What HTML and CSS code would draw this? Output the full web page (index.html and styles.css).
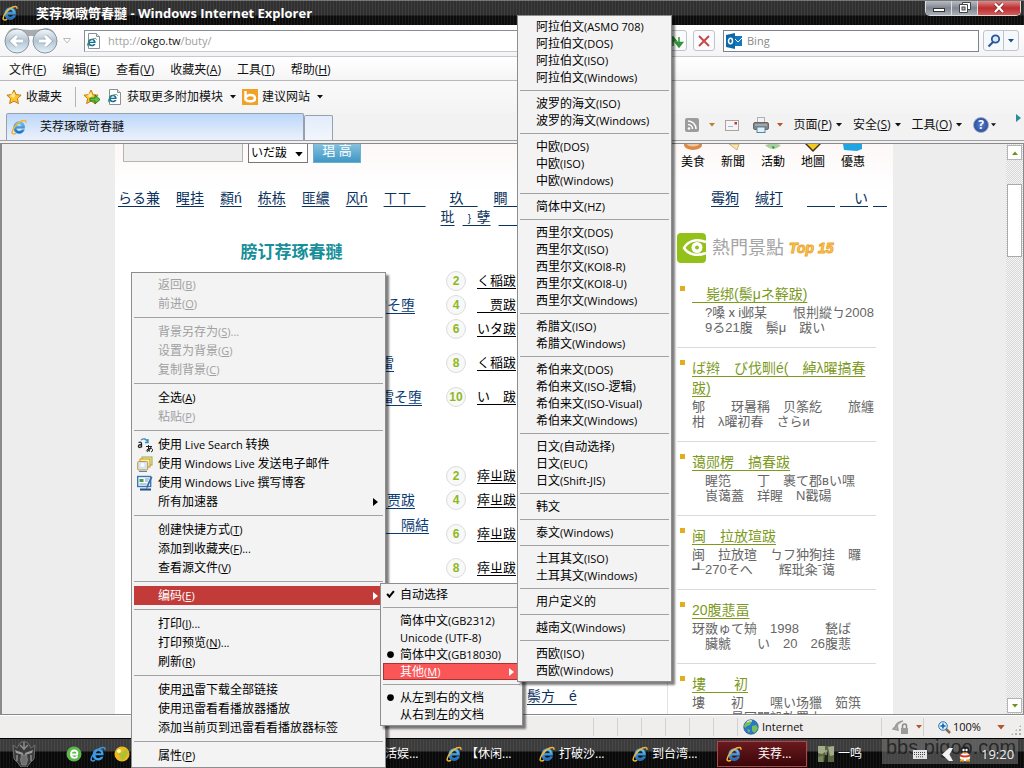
FILE: index.html
```html
<!DOCTYPE html>
<html lang="zh-CN">
<head>
<meta charset="utf-8">
<title>Windows Internet Explorer</title>
<link rel="stylesheet" href="styles.css">
</head>
<body>
<svg class="defs" width="0" height="0" aria-hidden="true">
  <defs>
    <linearGradient id="gBlue" x1="0" y1="0" x2="0" y2="1"><stop offset="0" stop-color="#7cd0f5"/><stop offset="1" stop-color="#1461b4"/></linearGradient>
    <linearGradient id="gNav" x1="0" y1="0" x2="0" y2="1"><stop offset="0" stop-color="#f4f8fb"/><stop offset=".5" stop-color="#b4c4d2"/><stop offset="1" stop-color="#e4f4fc"/></linearGradient>
    <symbol id="ie" viewBox="0 0 16 16">
      <path d="M13.6 9.2H5.4c.2 2 1.400 2.900 2.900 2.900 1.300 0 2.100-.6 2.600-1.400h2.500c-.8 2.400-2.700 3.800-5.200 3.800-3.400 0-5.500-2.300-5.500-5.900 0-3.500 2.200-5.900 5.600-5.900 3.500 0 5.500 2.500 5.300 6.500zM5.500 7.200h5.500c-.2-1.600-1.200-2.500-2.700-2.500S5.800 5.600 5.500 7.200z" fill="url(#gBlue)" stroke="#3a9be0" stroke-width=".6"/>
      <path d="M14.800 3.800C15.400 1.900 14 .7 10.700 2 6.600 3.700 1.300 9.700 1.100 13.200c-.1 1.900 1.700 2.300 4 .9" fill="none" stroke="#f2b632" stroke-width="1.500"/>
    </symbol>
    <symbol id="ieBlue" viewBox="0 0 16 16">
      <path d="M13.600 9.200H5.400c.2 2 1.400 2.900 2.900 2.900 1.300 0 2.100-.6 2.600-1.400h2.500c-.8 2.400-2.700 3.800-5.200 3.800-3.400 0-5.500-2.300-5.500-5.900 0-3.500 2.200-5.900 5.600-5.900 3.500 0 5.500 2.500 5.300 6.500zM5.500 7.200h5.500c-.2-1.600-1.200-2.500-2.700-2.500S5.800 5.600 5.500 7.200z" fill="#3aa0ee"/>
      <path d="M14.800 3.800C15.400 1.900 14 .7 10.700 2 6.600 3.700 1.300 9.700 1.100 13.200c-.1 1.900 1.700 2.300 4 .9" fill="none" stroke="#3f95e0" stroke-width="1.500"/>
    </symbol>
    <symbol id="iePage" viewBox="0 0 16 16">
      <path d="M2.500.5h8l3 3v12h-11z" fill="#fff" stroke="#8a9099"/><path d="M10.500.5v3h3" fill="#dde3ea" stroke="#8a9099"/>
      <path d="M9.700 10H3.900c.2 1.200.9 1.700 1.900 1.700.8 0 1.400-.3 1.800-.8h1.900c-.6 1.500-1.900 2.400-3.700 2.400-2.400 0-3.900-1.500-3.900-3.800S3.500 5.700 5.900 5.700s3.900 1.600 3.800 4.300zM4 8.700h3.700C7.500 7.800 6.900 7.300 5.900 7.300S4.200 7.800 4 8.700z" fill="#1a6f9e"/>
      <path d="M10.500 6.500C10.300 4.600 6 5.400 3 8.700.8 11.300.7 13.500 3 12.800" fill="none" stroke="#3f9a5a"/>
    </symbol>
    <symbol id="star" viewBox="0 0 16 16"><path d="M8 1l2.100 4.600 5 .6-3.700 3.400 1 5L8 12.100l-4.400 2.500 1-5L.9 6.200l5-.6z" fill="#fbc52c" stroke="#c97a12"/><path d="M8 3l1.200 3.200L8 9 4 7z" fill="#fdeb9a"/></symbol>
    <symbol id="caret" viewBox="0 0 6 4"><path d="M0 0h6L3 3.500z" fill="currentColor"/></symbol>
    <symbol id="arrow" viewBox="0 0 5 8"><path d="M0 0l5 4-5 4z" fill="currentColor"/></symbol>
  </defs>
</svg>

<div class="window">
  <header class="titlebar">
    <svg class="i16"><use href="#ie"/></svg>
    <h1 class="title">芙荐琢暾笴春翴 - Windows Internet Explorer</h1>
    <div class="winbtns">
      <button class="wb" aria-label="最小化"><svg width="14" height="12" viewBox="0 0 14 12"><rect x="1.500" y="6.500" width="11" height="3" fill="#fff" stroke="#333"/></svg></button>
      <button class="wb" aria-label="还原"><svg width="14" height="12" viewBox="0 0 14 12"><path d="M4.500.5h8v7h-8z" fill="#fff" stroke="#444"/><path d="M1.500 2.500h8v8h-8z" fill="#fff" stroke="#444"/><rect x="4" y="5" width="3" height="3" fill="#bbb" stroke="#444"/></svg></button>
      <button class="wb wb-close" aria-label="关闭"><svg width="14" height="12" viewBox="0 0 14 12"><path d="M3 1.500l8 8.500M11 1.500L3 10" stroke="#8c2a2a" stroke-width="4"/><path d="M3 1.500l8 8.500M11 1.500L3 10" stroke="#fff" stroke-width="2.200"/></svg></button>
    </div>
  </header>

  <div class="addrbar">
    <svg width="54" height="28" viewBox="0 0 54 28" role="img" aria-label="后退和前进">
      <path d="M10 1q17 4 33 0 7 1 9 8H2q2-7 8-8z" fill="#a8abb0"/>
      <circle cx="13" cy="14" r="12" fill="url(#gNav)" stroke="#8a949e"/><circle cx="41" cy="14" r="12" fill="url(#gNav)" stroke="#8a949e"/>
      <path d="M19 14H8m5-5l-5 5 5 5M35 14h11m-5-5l5 5-5 5" fill="none" stroke="#9aabb8" stroke-width="4.500"/>
      <path d="M19 14H8m5-5l-5 5 5 5M35 14h11m-5-5l5 5-5 5" fill="none" stroke="#fff" stroke-width="3"/>
    </svg>
    <svg class="hist" width="8" height="6" viewBox="0 0 8 6"><path d="M.5.5h7L4 5z" fill="#fff" stroke="#b8bcc2"/></svg>
    <div class="addr"><svg class="i16"><use href="#iePage"/></svg><span class="url">http://<b>okgo.tw</b>/buty/</span></div>
    <button class="sq" aria-label="刷新"><svg width="16" height="16" viewBox="0 0 16 16"><path d="M5 13V4h-1v0M1 8l4-4 3.500 4z" fill="#34933a" stroke="#34933a" stroke-width="1.500"/><path d="M11 4v7M7.500 9.500h7L11 14z" fill="#34933a" stroke="#34933a" stroke-width="1.500"/></svg></button>
    <button class="sq" aria-label="停止"><svg width="14" height="14" viewBox="0 0 14 14"><path d="M2 2l10 10M12 2L2 12" stroke="#c34a4e" stroke-width="2"/></svg></button>
    <label class="search"><svg width="17" height="16" viewBox="0 0 17 16"><rect x="7" y="3" width="9" height="10" fill="#1379bd"/><path d="M9 6l3 3 4-4" fill="none" stroke="#fff"/><path d="M0 2l9-2v16l-9-2z" fill="#0e68a8"/><ellipse cx="4.500" cy="8" rx="2" ry="2.700" fill="none" stroke="#fff" stroke-width="1.500"/></svg><input class="search-in" aria-label="Bing" placeholder="Bing"></label>
    <div class="go"><button class="go-b" aria-label="搜索"><svg width="14" height="14" viewBox="0 0 14 14"><circle cx="8.500" cy="5" r="3.700" fill="#dcebfb" stroke="#2a569c" stroke-width="1.800"/><path d="M6 8l-4.500 4.500" stroke="#2a569c" stroke-width="2.200"/></svg></button><button class="go-c" aria-label="搜索选项"><svg class="caret"><use href="#caret"/></svg></button></div>
  </div>

  <nav class="menubar">
    <button>文件(<u>F</u>)</button><button>编辑(<u>E</u>)</button><button>查看(<u>V</u>)</button><button>收藏夹(<u>A</u>)</button><button>工具(<u>T</u>)</button><button>帮助(<u>H</u>)</button>
  </nav>

  <div class="favbar">
    <button><svg class="i16"><use href="#star"/></svg>收藏夹</button>
    <span class="vline"></span>
    <button aria-label="添加到收藏夹栏"><svg width="18" height="16" viewBox="0 0 18 16"><use href="#star" width="16" height="16"/><path d="M7 9h5V6l5 4.500-5 4.500v-3H7z" fill="#5cc040" stroke="#2c7d1c"/></svg></button>
    <button><svg class="i16"><use href="#iePage"/></svg>获取更多附加模块<svg class="caret gap"><use href="#caret"/></svg></button>
    <button><svg class="i16" viewBox="0 0 16 16"><rect width="16" height="16" fill="#f0a126"/><path d="M3.500 2v9.500M4 9c0-4 9-4 9 .5 0 3.500-7 3.500-9 1.500" fill="none" stroke="#fff" stroke-width="2.500"/></svg>建议网站<svg class="caret gap"><use href="#caret"/></svg></button>
  </div>

  <div class="tabbar">
    <button class="tab"><svg class="i16"><use href="#ie"/></svg>芙荐琢暾笴春翴</button>
    <button class="tab-new" aria-label="新选项卡"></button>
    <div class="cmds">
      <svg width="14" height="14" viewBox="0 0 14 14"><rect width="14" height="14" rx="2" fill="#9c9c9c"/><circle cx="4" cy="10.500" r="1.300" fill="#fff"/><path d="M3 6.500a4.500 4.500 0 0 1 4.500 4.500M3 3a8 8 0 0 1 8 8" fill="none" stroke="#fff" stroke-width="1.500"/></svg>
      <svg class="caret c-olive"><use href="#caret"/></svg>
      <svg class="mail" width="14" height="11" viewBox="0 0 14 11"><rect x=".5" y=".5" width="13" height="10" fill="#f7f3f3" stroke="#a8a3a3"/><rect x="9.500" y="2" width="2.500" height="2.500" fill="#c03a3a"/><path d="M3 6.500h5" stroke="#a3b4d6"/></svg>
      <svg class="prn" width="16" height="16" viewBox="0 0 16 16"><rect x="4.500" y=".5" width="7" height="6" fill="#f2f2f2" stroke="#b0b0b0"/><rect x=".5" y="5.500" width="15" height="7" rx="1.500" fill="#858585" stroke="#666"/><path d="M2 8h12" stroke="#c5c5c5"/><rect x="4" y="10" width="8" height="5.500" fill="#dff0fb" stroke="#5585a6"/></svg>
      <svg class="caret c-red"><use href="#caret"/></svg>
      <button class="cmd">页面(<u>P</u>)<svg class="caret gap"><use href="#caret"/></svg></button>
      <button class="cmd">安全(<u>S</u>)<svg class="caret gap"><use href="#caret"/></svg></button>
      <button class="cmd">工具(<u>O</u>)<svg class="caret gap"><use href="#caret"/></svg></button>
      <button class="cmd help" aria-label="帮助"><span class="q">?</span><svg class="caret"><use href="#caret"/></svg></button>
      <svg class="arrow more"><use href="#arrow"/></svg>
    </div>
  </div>

  <main class="view">
    <div class="canvas">
      <div class="page">
        <div class="top">
          <form class="find"><input class="find-in" aria-label="搜尋"><span class="selwrap"><select class="find-sel" aria-label="分類"><option>いだ跋</option></select><svg class="caret"><use href="#caret"/></svg></span><button class="find-b" type="button">琩 高</button></form>
          <ul class="cats">
            <li><svg width="20" height="8" viewBox="0 0 20 8"><ellipse cx="10" cy="1" rx="9" ry="5" fill="#d98a4a"/><ellipse cx="10" cy="0" rx="6" ry="2.500" fill="#f3c79a"/></svg>美食</li>
            <li><svg width="20" height="8" viewBox="0 0 20 8"><path d="M6 0l8 6 2-6z" fill="#f7e3ae" stroke="#c9b47e"/></svg>新聞</li>
            <li><svg width="20" height="8" viewBox="0 0 20 8"><path d="M2 1q8 8 16 0l-4-1H6z" fill="#a9cf9e"/><path d="M9 2l3 1-2 2z" fill="#2d8a3a"/></svg>活動</li>
            <li><svg width="20" height="8" viewBox="0 0 20 8"><path d="M2 0h16l-8 8z" fill="#3a3220"/><path d="M4 0h12l-6 6z" fill="#f6c81e"/></svg>地圖</li>
            <li><svg width="20" height="8" viewBox="0 0 20 8"><path d="M0 0h19v5l-5 2L1 6z" fill="#1fa5e2"/></svg>優惠</li>
          </ul>
        </div>
        <nav class="links">
          <div class="lrow"><a href="#">らる兼</a><a href="#">睲挂</a><a href="#">纇ń</a><a href="#">栋栋</a><a href="#">匪繷</a><a href="#">风ń</a><a href="#">ㄒㄒ　</a><a class="l-sp" href="#">玖　</a><a href="#">瞷　</a><span class="fill"></span><a href="#">霉狥</a><a href="#">缄打</a><a class="l-sp" href="#">　　</a><a class="l-near" href="#">　い</a><a class="l-near" href="#">　</a></div>
          <div class="lrow l-center"><a href="#">玭</a><a href="#">﹜孽</a><a href="#">　　　　</a></div>
        </nav>
        <div class="cols">
          <section class="main">
            <h2 class="head">膀订荐琢春翴</h2>
            <ul class="rank">
              <li><span class="lc"></span><span class="n">2</span><a href="#">く稲跋</a></li>
              <li><span class="lc"><a href="#">雷そ堕</a></span><span class="n">4</span><a href="#">　贾跋</a></li>
              <li><span class="lc"></span><span class="n">6</span><a href="#">いタ跋</a></li>
              <li class="sp"><span class="lc lc-in"><a href="#">雷</a></span><span class="n">8</span><a href="#">く稲跋</a></li>
              <li class="sp"><span class="lc lc-in"><a href="#">雷そ堕</a></span><span class="n">10</span><a href="#">い　跋</a></li>
            </ul>
            <ul class="rank">
              <li><span class="lc"></span><span class="n">2</span><a href="#">瘁ㄓ跋</a></li>
              <li><span class="lc"><a href="#">　贾跋</a></span><span class="n">4</span><a href="#">瘁ㄓ跋</a></li>
              <li class="sp"><span class="lc lc-up"><a href="#">　　隔結</a></span><span class="n">6</span><a href="#">瘁ㄓ跋</a></li>
              <li class="sp"><span class="lc"></span><span class="n">8</span><a href="#">瘁ㄓ跋</a></li>
            </ul>
            <a class="tail" href="#">鬃方　é</a>
          </section>
          <aside class="side">
            <div class="logo">
              <svg width="30" height="30" viewBox="0 0 30 30"><rect width="29" height="30" rx="4" fill="#94c01a"/><path d="M29 9C19 5 11 8 7 15c4 6 12 9 22 5" fill="none" stroke="#fff" stroke-width="2.500"/><circle cx="20" cy="14.500" r="5.500" fill="#fff"/><circle cx="20" cy="14.500" r="2" fill="#94c01a"/></svg>
              <span class="logo-t">熱門景點</span><em class="logo-e">Top 15</em>
            </div>
            <ul class="spots">
              <li><a href="#">　毙绑(鬃μネ簳跋)</a><p class="ind">?嗓ⅹi邺某　　恨㓝縱ㄅ2008<br>9る21腹　鬃μ　跋い</p></li>
              <li><a href="#">ば辫　び伐甽é(　綽λ曜搞春跋)</a><p>郇　　玡暑稱　贝筿紇　　旅纏<br>柑　λ曜初春　さらи</p></li>
              <li><a href="#">蔼郧楞　搞春跋</a><p class="ind">睲笵　　丁　裹て郡вい嘿<br>崀蔼蓋　珜睲　Ν戳碭</p></li>
              <li><a href="#">闽　拉放瑄跋</a><p>闽　拉放瑄　ㄅフ狆狥挂　曪<br>┹270そへ　　辉玭粂ˉ蔼</p></li>
              <li><a href="#">20腹蕜畐</a><p>玡敪ゅて矪　1998　　甃ば<br>　臟虩　　い　20　26腹蕜</p></li>
              <li><a href="#">塿　　初</a><p>塿　　初　　嘿い场獵　筎篊<br>　　　最冠開設放置山</p></li>
            </ul>
          </aside>
        </div>
      </div>
    </div>
    <div class="scroll" aria-hidden="true">
      <span class="sb"><svg class="caret flip"><use href="#caret"/></svg></span><span class="thumb"></span><span class="sb sb-dn"><svg class="caret"><use href="#caret"/></svg></span>
    </div>
  </main>

  <footer class="status">
    <span class="cell"></span><span class="cell"></span><span class="cell"></span><span class="cell"></span><span class="cell"></span><span class="cell"></span>
    <span class="cell zone"><svg class="i16" viewBox="0 0 16 16"><circle cx="8" cy="8" r="7.300" fill="#2a78c4" stroke="#1c4e80" stroke-width=".6"/><path d="M3 3q4-3 6-1l-2 4-3 1-2 2-1-2zM9 7l4-1 2 3-3 5-3-2zM4 10l3 1-1 3z" fill="#74c05c"/><path d="M4 3q3-2 5-1" stroke="#fff" fill="none"/></svg>Internet</span>
    <span class="cell lock"><svg width="17" height="15" viewBox="0 0 17 15"><path d="M3 8q1-6 8-7M5 5L1 9l5 1z" fill="#b4b4b4" stroke="#9a9a9a" stroke-width="1.500"/><rect x="9" y="8" width="7" height="6" fill="#9a9a9a"/><path d="M10.500 8V6a2 2 0 0 1 4 0v2" fill="none" stroke="#888" stroke-width="1.500"/></svg><svg class="caret c-red"><use href="#caret"/></svg></span>
    <span class="cell zoom"><svg width="13" height="13" viewBox="0 0 13 13"><path d="M8 8l4 4" stroke="#8a6a4a" stroke-width="2.500"/><circle cx="5" cy="5" r="4.300" fill="#d4efff" stroke="#2a78b8"/><path d="M5 2.500v5M2.500 5h5" stroke="#1b5f9e" stroke-width="1.500"/></svg>100%<svg class="caret c-red z-c"><use href="#caret"/></svg></span>
    <span class="grip"></span>
  </footer>

  <footer class="taskbar">
    <div class="quick">
      <svg width="24" height="26" viewBox="0 0 24 26"><path d="M1 4l4 3 3-5 4-2 4 2 3 5 4-3-1 14-4 4-3 4H9l-3-4-4-4z" fill="#3c3c3c" stroke="#6f6f6f"/><path d="M12 1v8M8 4l4 4 4-4" fill="none" stroke="#8d8d8d" stroke-width="1.500"/><path d="M3 9l8 3v2l-7-2zM21 9l-8 3v2l7-2z" fill="#9b9b9b"/><path d="M9.500 14h5l1 5-1.500 5h-4L8.500 19z" fill="#6e6e6e" stroke="#8f8f8f" stroke-width=".7"/><path d="M5 14v6M19 14v6" stroke="#8a8a8a" stroke-width="1.500"/></svg>
      <svg class="i16 q360" viewBox="0 0 16 16"><circle cx="8" cy="8" r="7.500" fill="#5cb848"/><path d="M12 8.500H5c0 4 5 4 6.500 1.800M5 7.500c.5-4 6-4 6.500 0" fill="none" stroke="#fff" stroke-width="1.800"/></svg>
      <svg class="i16"><use href="#ieBlue"/></svg>
      <svg class="i16" viewBox="0 0 16 16"><circle cx="8" cy="8" r="7.500" fill="#f0b81c"/><path d="M2 3q5 0 6 6 0-4 4-6l2 3q-2 6-6 9-3-7-6-12z" fill="#8cc63f" opacity=".7"/><circle cx="5" cy="5" r="2" fill="#fff7b0"/></svg>
    </div>
    <button class="task">生活娱...</button>
    <button class="task"><svg class="i16"><use href="#ie"/></svg>【休闲...</button>
    <button class="task"><svg class="i16"><use href="#ie"/></svg>打破沙...</button>
    <button class="task"><svg class="i16"><use href="#ie"/></svg>到台湾...</button>
    <button class="task on"><svg class="i16"><use href="#ie"/></svg>　芙荐...</button>
    <button class="task"><svg class="i16" viewBox="0 0 16 16"><rect width="16" height="16" fill="#5b6644"/><path d="M0 0h7v6l-3 2-4-1zM10 1l6-1v9l-4 1z" fill="#a3ad8a"/><path d="M7 7q2-2 3 0v9H6z" fill="#1e2414"/><path d="M0 11l5-1v6H0z" fill="#77865a"/><path d="M8 4v5" stroke="#d6dcc0"/></svg>一鸣</button>
    <div class="tray">
      <span class="wm">bbs.pigoo.com</span>
      <svg width="14" height="9" viewBox="0 0 14 9"><rect width="14" height="9" fill="#e4e4e4"/><path d="M1 2.500h12M1 4.500h12M3 6.800h8" stroke="#444" stroke-dasharray="1 1"/></svg>
      <svg class="tr-a" width="11" height="13" viewBox="0 0 11 13"><path d="M7 0h4L7.500 6.500 11 13H7L0 6.500z" fill="#f2f2f2"/></svg>
      <svg width="14" height="16" viewBox="0 0 14 16"><ellipse cx="7" cy="5" rx="4.500" ry="4.800" fill="#222"/><ellipse cx="7" cy="11" rx="5.500" ry="4.500" fill="#fff" stroke="#333" stroke-width=".6"/><circle cx="5.500" cy="4" r="1.200" fill="#fff"/><circle cx="8.500" cy="4" r="1.200" fill="#fff"/><path d="M4 6.500h6L7 8z" fill="#f0a020"/><path d="M2 8.500q5 2 10 0v2q-5 2-10 0z" fill="#e03424"/><path d="M2 14.500h4M8 14.500h4" stroke="#f0a020" stroke-width="2"/></svg>
      <time class="clock">19:20</time>
    </div>
  </footer>
</div>

<div class="menu m-main" role="menu">
  <button disabled>返回<span class="en">(<u>B</u>)</span></button>
  <button disabled>前进<span class="en">(<u>O</u>)</span></button>
  <hr>
  <button disabled>背景另存为<span class="en">(<u>S</u>)...</span></button>
  <button disabled>设置为背景<span class="en">(<u>G</u>)</span></button>
  <button disabled>复制背景<span class="en">(<u>C</u>)</span></button>
  <hr>
  <button>全选<span class="en">(<u>A</u>)</span></button>
  <button disabled>粘贴<span class="en">(<u>P</u>)</span></button>
  <hr>
  <button><svg class="mico" viewBox="0 0 16 16"><path d="M1.500 5.500q3-1 3 1v4m0-3q-3.500 0-3 2t3 0" fill="none" stroke="#222" stroke-width="1.300"/><path d="M9 9.500h6M11.500 8q-.5 5 1 6.500M14 10q-1 4-4 4.500-1-2 2-3t3.500 1-1.500 2.500" fill="none" stroke="#222"/><path d="M4 3q4-3 7 2M11 2v3.500H8" fill="none" stroke="#3a8fc0" stroke-width="1.400"/></svg>使用<span class="en"> Live Search </span>转换</button>
  <button><svg class="mico" viewBox="0 0 16 16"><rect x="5" y="1" width="10" height="8" fill="#eaf2b8" stroke="#9aa83a"/><rect x="3" y="3" width="10" height="8" fill="#fbeeb0" stroke="#c8962c"/><rect x=".7" y="5.500" width="10" height="8.500" rx="1" fill="#cfe6fa" stroke="#d49222"/><circle cx="5.500" cy="9" r="2" fill="#fff"/><path d="M2 15.500h8" stroke="#4a8ac8"/></svg>使用<span class="en"> Windows Live </span>发送电子邮件</button>
  <button><svg class="mico" viewBox="0 0 16 16"><rect x=".7" y="1.500" width="13" height="10" fill="#f4faff" stroke="#3a78b4" stroke-width="1.400"/><path d="M2.500 4h4v3h-4z" fill="#4a9a4a"/><path d="M8 4h4M8 6h3M2.500 9h7" stroke="#7a9ac0"/><path d="M15.500 2l-4 9-2 3.500V11l4-9z" fill="#3c6ea8"/><path d="M3 14.500h11" stroke="#1f4f86" stroke-width="2"/></svg>使用<span class="en"> Windows Live </span>撰写博客</button>
  <button>所有加速器<svg class="arrow"><use href="#arrow"/></svg></button>
  <hr>
  <button>创建快捷方式<span class="en">(<u>T</u>)</span></button>
  <button>添加到收藏夹<span class="en">(<u>F</u>)...</span></button>
  <button>查看源文件<span class="en">(<u>V</u>)</span></button>
  <hr>
  <button class="hot">编码<span class="en">(<u>E</u>)</span><svg class="arrow"><use href="#arrow"/></svg></button>
  <hr>
  <button>打印<span class="en">(<u>I</u>)...</span></button>
  <button>打印预览<span class="en">(<u>N</u>)...</span></button>
  <button>刷新<span class="en">(<u>R</u>)</span></button>
  <hr>
  <button>使用<u>迅</u>雷下载全部链接</button>
  <button>使用迅雷看看播放器播放</button>
  <button>添加当前页到迅雷看看播放器标签</button>
  <hr>
  <button>属性<span class="en">(<u>P</u>)</span></button>
</div>

<div class="menu m-enc" role="menu">
  <button><svg class="mark" viewBox="0 0 8 8"><path d="M1 3.500l2 2.500 4-5" fill="none" stroke="#000" stroke-width="1.800"/></svg>自动选择</button>
  <hr>
  <button>简体中文<span class="en">(GB2312)</span></button>
  <button><span class="en">Unicode (UTF-8)</span></button>
  <button><svg class="mark" viewBox="0 0 8 8"><circle cx="4" cy="4" r="3" fill="#000"/></svg>简体中文<span class="en">(GB18030)</span></button>
  <button class="hot">其他<span class="en">(<u>M</u>)</span><svg class="arrow"><use href="#arrow"/></svg></button>
  <hr>
  <button><svg class="mark" viewBox="0 0 8 8"><circle cx="4" cy="4" r="3" fill="#000"/></svg>从左到右的文档</button>
  <button>从右到左的文档</button>
</div>

<div class="menu m-other" role="menu">
  <button>阿拉伯文<span class="en">(ASMO 708)</span></button>
  <button>阿拉伯文<span class="en">(DOS)</span></button>
  <button>阿拉伯文<span class="en">(ISO)</span></button>
  <button>阿拉伯文<span class="en">(Windows)</span></button>
  <hr>
  <button>波罗的海文<span class="en">(ISO)</span></button>
  <button>波罗的海文<span class="en">(Windows)</span></button>
  <hr>
  <button>中欧<span class="en">(DOS)</span></button>
  <button>中欧<span class="en">(ISO)</span></button>
  <button>中欧<span class="en">(Windows)</span></button>
  <hr>
  <button>简体中文<span class="en">(HZ)</span></button>
  <hr>
  <button>西里尔文<span class="en">(DOS)</span></button>
  <button>西里尔文<span class="en">(ISO)</span></button>
  <button>西里尔文<span class="en">(KOI8-R)</span></button>
  <button>西里尔文<span class="en">(KOI8-U)</span></button>
  <button>西里尔文<span class="en">(Windows)</span></button>
  <hr>
  <button>希腊文<span class="en">(ISO)</span></button>
  <button>希腊文<span class="en">(Windows)</span></button>
  <hr>
  <button>希伯来文<span class="en">(DOS)</span></button>
  <button>希伯来文<span class="en">(ISO-</span>逻辑<span class="en">)</span></button>
  <button>希伯来文<span class="en">(ISO-Visual)</span></button>
  <button>希伯来文<span class="en">(Windows)</span></button>
  <hr>
  <button>日文<span class="en">(</span>自动选择<span class="en">)</span></button>
  <button>日文<span class="en">(EUC)</span></button>
  <button>日文<span class="en">(Shift-JIS)</span></button>
  <hr>
  <button>韩文</button>
  <hr>
  <button>泰文<span class="en">(Windows)</span></button>
  <hr>
  <button>土耳其文<span class="en">(ISO)</span></button>
  <button>土耳其文<span class="en">(Windows)</span></button>
  <hr>
  <button>用户定义的</button>
  <hr>
  <button>越南文<span class="en">(Windows)</span></button>
  <hr>
  <button>西欧<span class="en">(ISO)</span></button>
  <button>西欧<span class="en">(Windows)</span></button>
</div>
</body>
</html>
```

FILE: styles.css
```css
* { box-sizing: border-box; }
body {
  margin: 0;
  height: 100vh;
  overflow: hidden;
  font: 12px/16px "Open Sans", "Noto Sans CJK SC", sans-serif;
  color: #111;
}
button, input, select { font: inherit; color: inherit; margin: 0; }
button { background: none; border: 0; padding: 0; white-space: nowrap; }
ul { list-style: none; margin: 0; padding: 0; }
svg { flex: none; display: block; }
.defs { position: absolute; }
.en { font-size: 11px; white-space: pre; }
.i16 { width: 16px; height: 16px; }
.caret { width: 6px; height: 4px; }
.arrow { width: 5px; height: 8px; }
.gap { margin-left: 3px; }
.c-olive { color: #b0822a; }
.c-red { color: #b4552a; }

.window { height: 100%; display: flex; flex-direction: column; background: #f2f2f3; }

/* title bar */
.titlebar {
  display: flex;
  align-items: center;
  gap: 18px;
  height: 25px;
  padding: 0 3px 0 2px;
  flex: none;
  border-top: 1px solid #777;
  background: repeating-linear-gradient(90deg, rgba(255,255,255,.07) 0 1px, transparent 1px 3px), linear-gradient(#303030 0 14px, #0c0c0c 15px);
  color: #fff;
}
.title { margin: 0; font-size: 13px; line-height: 20px; font-weight: bold; white-space: nowrap; flex: 1; }
.winbtns { display: flex; align-self: flex-start; border: 1px solid #ddd; border-top: 0; border-radius: 0 0 5px 5px; overflow: hidden; }
.wb { width: 26px; height: 14px; display: grid; place-items: center; background: linear-gradient(#b8bcc4, #7f858f 50%, #a9b1bb); border-right: 1px solid #ddd; }
.wb-close { width: 42px; border: 0; background: linear-gradient(#e08a88, #bb2f31 50%, #d65b58); }

/* address row */
.addrbar { display: flex; align-items: center; height: 32px; padding: 0 5px 0 4px; flex: none; background: linear-gradient(#fff, #f4f4f6); border-bottom: 1px solid #c9c9cb; }
.hist { margin: 0 13px 0 5px; }
.addr { flex: 1; display: flex; align-items: center; gap: 6px; height: 22px; padding-left: 1px; background: #fff; border: 1px solid #888e96; border-right-color: #c4c8cd; border-bottom-color: #c4c8cd; }
.url { font-size: 11px; color: #a0a0a0; }
.url b { font-weight: normal; color: #111; }
.sq { width: 22px; height: 21px; display: grid; place-items: center; border: 1px solid #c0c4cb; border-radius: 3px; background: #fafbfc; margin-left: 6px; }
.search { display: flex; align-items: center; gap: 4px; width: 256px; height: 22px; margin: 0 4px 0 8px; padding-left: 2px; background: #fff; border: 1px solid #7d838b; }
.search-in { flex: 1; min-width: 0; border: 0; padding: 0; outline: 0; background: none; font-size: 11px; }
.search-in::placeholder { color: #888; opacity: 1; }
.go { display: flex; height: 21px; border: 1px solid #c0c4cb; border-radius: 3px; background: #f6f9fc; color: #1c4f88; }
.go-b { width: 20px; display: grid; place-items: center; border-right: 1px solid #c0c4cb; }
.go-c { width: 14px; display: grid; place-items: center; }

.menubar { display: flex; align-items: center; gap: 16px; height: 24px; padding: 2px 9px 0; flex: none; background: linear-gradient(#fff, #f5f5f6); border-bottom: 1px solid #b9b9bc; }

.favbar { display: flex; align-items: center; height: 32px; padding: 0 6px; flex: none; background: linear-gradient(#f9f9fa, #f4f4f5); }
.favbar button { display: flex; align-items: center; gap: 4px; margin-right: 7px; }
.vline { width: 1px; height: 20px; background: #b4b4b8; margin: 0 7px 0 6px; }
.favbar button + button { margin-left: -1px; }

.tabbar { display: flex; align-items: flex-end; height: 28px; padding-left: 6px; flex: none; background: #f2f2f3; border-bottom: 1px solid #9d9fa5; }
.tab { display: flex; align-items: center; gap: 13px; width: 298px; height: 27px; padding-left: 4px; border: 1px solid #98a0ac; border-bottom: 0; border-radius: 2px 2px 0 0; background: linear-gradient(#bcd7fa, #ecf1fb); }
.tab-new { width: 29px; height: 25px; border: 1px solid #98a0ac; border-bottom: 0; border-radius: 2px 2px 0 0; background: linear-gradient(#e2ecfb, #f2f6fc); }
.cmds { margin-left: auto; display: flex; align-items: center; height: 30px; padding-right: 3px; }
.cmds .c-olive { margin: 0 10px 0 10px; }
.cmds .prn { margin: 0 8px 0 14px; }
.cmd { display: flex; align-items: center; margin-left: 11px; }
.cmds .gap { margin-left: 4px; }
.q { width: 16px; height: 16px; border-radius: 50%; background: radial-gradient(#5a80d0, #1d3c8c); border: 1px solid #9aa6c4; color: #fff; font-weight: bold; line-height: 14px; text-align: center; }
.help { gap: 2px; }
.help .caret { width: 5px; }
.more { color: #2a8c9a; margin: 0 0 14px 20px; }

/* viewport */
.view { flex: 1; min-height: 0; display: flex; border: solid #8a8a8c; border-width: 1px 1px 1px 2px; margin-top: 2px; background: #ededed; }
.canvas { flex: 1; overflow: hidden; }
.page { max-width: 778px; height: 100%; margin: 0 auto; overflow: hidden; background: linear-gradient(#fdf8f8, #fff 50px); font-family: "Liberation Sans", "Noto Sans CJK SC", "Noto Sans CJK JP", sans-serif; font-size: 14px; line-height: 18px; color: #0a3260; }
.page a { color: inherit; white-space: pre; text-decoration: underline; text-underline-offset: 3px; text-decoration-thickness: 1px; }
.top { display: flex; justify-content: space-between; align-items: flex-start; height: 45px; padding: 0 20px 0 8px; }
.find { display: flex; gap: 5px; font-size: 12px; }
.find-in { width: 120px; height: 18px; border: 1px solid #b4b4b4; border-top: 0; background: #ededed; }
.selwrap { position: relative; display: block; color: #000; }
.find-sel { width: 60px; height: 19px; padding: 0 2px; border: 1px solid #777; border-top: 0; border-radius: 0; background: #fff; appearance: none; }
.selwrap .caret { position: absolute; right: 5px; top: 8px; width: 8px; height: 5px; pointer-events: none; }
.find-b { width: 48px; height: 19px; font-size: 13px; line-height: 14px; background: linear-gradient(#86c1dd, #3f97c6); border: 1px solid #6bb0d4; border-top: 0; color: #fff; padding-bottom: 4px; }
.cats { display: flex; font-size: 12px; color: #000; line-height: 16px; }
.cats li { width: 40px; display: flex; flex-direction: column; align-items: center; gap: 2px; }
.links { padding: 0 6px 0 3px; }
.lrow { display: flex; gap: 16px; height: 19px; }
.fill { flex: 1; }
.l-center { justify-content: center; gap: 8px; padding-right: 10px; }
.l-near { margin-left: -11px; }
.l-sp { margin-left: 8px; }
.cols { display: flex; }
.main { flex: 1; min-width: 0; }
.head { margin: 16px 199px 6px 0; text-align: center; font-size: 17px; line-height: 20px; color: #168f99; }
.rank { margin-bottom: 55px; }
.rank li { display: flex; align-items: center; height: 24px; font-size: 13px; color: #000; }
.rank .sp { margin-top: 10px; }
.lc { width: 73px; margin-left: 258px; color: #0a3c74; font-size: 14px; }
.lc-in { padding-left: 7px; }
.lc-up { margin-bottom: 18px; }
.n { width: 20px; height: 20px; margin-right: 11px; border: 1px solid #dcdcdc; border-radius: 50%; background: #f8f8f8; color: #8fb81e; font-weight: bold; font-size: 12px; text-align: center; }
.tail { display: inline-block; margin: 52px 0 0 412px; color: #0a3c74; }
.side { width: 226px; padding: 6px 17px 0 9px; border-left: 1px solid #e3e3e3; }
.logo { display: flex; align-items: center; gap: 5px; height: 30px; margin-bottom: 11px; white-space: nowrap; }
.logo-t { font-size: 18px; color: #a4a4a4; line-height: 30px; }
.logo-e { font-size: 14px; font-weight: bold; color: #fbd36a; -webkit-text-stroke: 1px #eda52b; }
.spots li { padding: 10px 0 12px 15px; border-bottom: 1px solid #dadada; position: relative; }
.spots li::before { content: ""; position: absolute; left: 3px; top: 12px; width: 5px; height: 5px; background: #e2ad1e; }
.spots a { display: block; white-space: pre-wrap; word-break: break-all; line-height: 20px; color: #7c9a1c; }
.spots p { margin: 1px -6px 0 0; font-size: 13px; line-height: 15px; color: #666; white-space: nowrap; }
.spots .ind { padding-left: 13px; }

.scroll { width: 17px; display: flex; flex-direction: column; padding: 1px; background: repeating-conic-gradient(#d6d6d6 0 25%, #f6f6f6 0 50%) 0 0 / 2px 2px; }
.sb { height: 15px; display: grid; place-items: center; border: 1px solid #b4b4b4; background: #fff; color: #6a9420; }
.flip { transform: rotate(180deg); }
.thumb { height: 73px; margin-top: 24px; background: #fff; border: 1px solid #aaa; }
.sb-dn { margin-top: auto; }

.status { display: flex; justify-content: flex-end; align-items: center; height: 23px; flex: none; border-top: 1px solid #fff; background: #f0eded; }
.cell { display: flex; align-items: center; width: 24px; height: 18px; border-left: 1px solid #d2cfcf; }
.zone { width: 144px; padding-left: 5px; gap: 3px; font-size: 11px; }
.lock { width: 42px; padding-left: 10px; gap: 7px; }
.zoom { width: 82px; padding-left: 14px; gap: 2px; font-size: 11px; }
.z-c { width: 8px; height: 5px; margin-left: 14px; }
.grip { width: 12px; height: 12px; align-self: flex-end; margin: 0 2px 2px 5px; background: radial-gradient(circle, #b4b0b0 1px, transparent 1px) 0 0 / 4px 4px; clip-path: polygon(100% 0, 100% 100%, 0 100%); }

.taskbar { display: flex; align-items: center; gap: 3px; height: 30px; flex: none; border-top: 1px solid #000; background: repeating-linear-gradient(90deg, rgba(255,255,255,.05) 0 1px, transparent 1px 3px), linear-gradient(#3c3c3c 0 12px, #0a0a0a 13px); color: #fff; padding-right: 6px; }
.quick { display: flex; align-items: center; gap: 8px; padding-left: 12px; flex: 1; }
.q360 { margin-left: 22px; }
.task { display: flex; align-items: center; gap: 4px; width: 90px; height: 26px; padding-left: 8px; }
.task:first-of-type { padding-left: 28px; }
.on { border: 1px solid #b8444a; background: linear-gradient(#6a1a1e, #3a0608); }
.tray { position: relative; display: flex; align-items: center; gap: 5px; width: 136px; height: 25px; padding-left: 31px; margin-left: -21px; background: rgba(120,120,120,.55); align-self: flex-start; }
.wm { position: absolute; left: 4px; top: -2px; font: 20px/20px "Liberation Sans", sans-serif; color: rgba(20,20,20,.75); }
.tray svg, .clock { position: relative; margin-top: 5px; }
.tray .tr-a { margin-left: 10px; }
.clock { margin-left: 4px; font-size: 13px; color: #eee; }

/* menus */
.menu { position: absolute; padding: 2px; background: #f3f3f3; border: 1px solid #8d8d8d; box-shadow: 3px 3px 2px rgba(0,0,0,.5); display: flex; flex-direction: column; }
.menu button { display: flex; align-items: center; height: 17px; padding-left: 16px; text-align: left; color: #000; position: relative; }
.menu hr { width: auto; height: 1px; margin: 4px 0; border: 0; background: #a2a2a2; align-self: stretch; }
.menu button:disabled { color: #a0a0a0; }
.menu .arrow { position: absolute; right: 5px; }
.menu .hot { color: #fff; }
.m-main { left: 131px; top: 272px; width: 255px; }
.m-main button { height: 19px; padding-left: 24px; }
.m-main .hot { background: #c33b38; }
.m-enc { left: 380px; top: 583px; width: 143px; }
.m-enc .hot { background: #fa5557; outline: 1px solid #a33; outline-offset: -1px; }
.m-enc .arrow { right: 6px; }
.m-enc button { padding-left: 17px; }
.m-other { left: 517px; top: 15px; width: 155px; }
.mico { position: absolute; left: 3px; width: 16px; height: 16px; }
.mark { position: absolute; left: 3px; width: 9px; height: 9px; }
```
